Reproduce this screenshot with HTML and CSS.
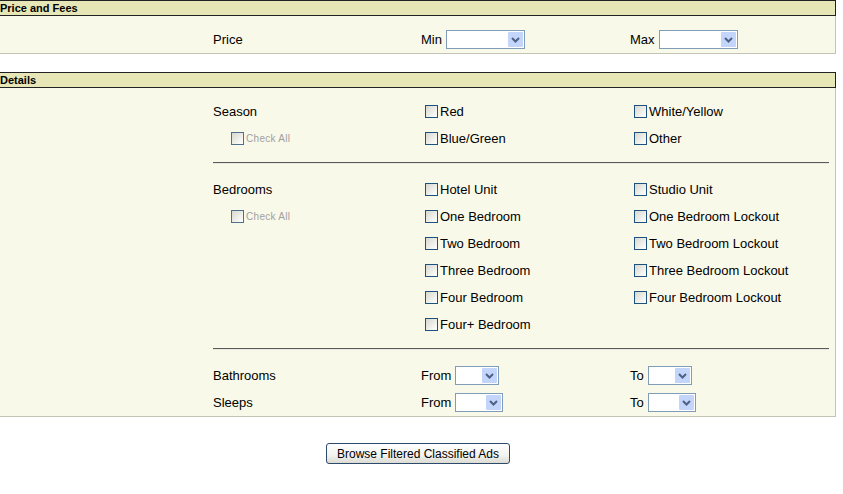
FILE: index.html
```html
<!DOCTYPE html>
<html lang="en">
<head>
    <meta charset="UTF-8">
    <title>Browse Classified Ads</title>
    <link rel="stylesheet" href="styles.css">
</head>
<body>
<div id="search">

    <div class="panel-head">Price and Fees</div>
    <div class="panel-body">
        <div class="row">
            <span>Price</span>
            <span class="pick">Min <span class="combo w78"><span class="field"></span><svg class="arrow" width="15" height="15" viewBox="0 0 15 15"><rect x="0" y="0" width="15" height="15" rx="1" fill="#c4d5fb"/><path d="M4 6 L7.5 9.5 L11 6" fill="none" stroke="#4d6185" stroke-width="2"/></svg></span></span>
            <span class="pick">Max <span class="combo w78"><span class="field"></span><svg class="arrow" width="15" height="15" viewBox="0 0 15 15"><rect x="0" y="0" width="15" height="15" rx="1" fill="#c4d5fb"/><path d="M4 6 L7.5 9.5 L11 6" fill="none" stroke="#4d6185" stroke-width="2"/></svg></span></span>
        </div>
    </div>

    <div class="panel-head second">Details</div>
    <div class="panel-body details">
        <div class="row">
            <span>Season</span>
            <label class="opt"><input type="checkbox">Red</label>
            <label class="opt"><input type="checkbox">White/Yellow</label>
        </div>
        <div class="row">
            <label class="check-all"><input type="checkbox">Check All</label>
            <label class="opt"><input type="checkbox">Blue/Green</label>
            <label class="opt"><input type="checkbox">Other</label>
        </div>

        <div class="sep"></div>

        <div class="row">
            <span>Bedrooms</span>
            <label class="opt"><input type="checkbox">Hotel Unit</label>
            <label class="opt"><input type="checkbox">Studio Unit</label>
        </div>
        <div class="row">
            <label class="check-all"><input type="checkbox">Check All</label>
            <label class="opt"><input type="checkbox">One Bedroom</label>
            <label class="opt"><input type="checkbox">One Bedroom Lockout</label>
        </div>
        <div class="row">
            <span></span>
            <label class="opt"><input type="checkbox">Two Bedroom</label>
            <label class="opt"><input type="checkbox">Two Bedroom Lockout</label>
        </div>
        <div class="row">
            <span></span>
            <label class="opt"><input type="checkbox">Three Bedroom</label>
            <label class="opt"><input type="checkbox">Three Bedroom Lockout</label>
        </div>
        <div class="row">
            <span></span>
            <label class="opt"><input type="checkbox">Four Bedroom</label>
            <label class="opt"><input type="checkbox">Four Bedroom Lockout</label>
        </div>
        <div class="row">
            <span></span>
            <label class="opt"><input type="checkbox">Four+ Bedroom</label>
            <span></span>
        </div>

        <div class="sep"></div>

        <div class="row">
            <span>Bathrooms</span>
            <span class="pick">From <span class="combo w43"><span class="field"></span><svg class="arrow" width="15" height="15" viewBox="0 0 15 15"><rect x="0" y="0" width="15" height="15" rx="1" fill="#c4d5fb"/><path d="M4 6 L7.5 9.5 L11 6" fill="none" stroke="#4d6185" stroke-width="2"/></svg></span></span>
            <span class="pick">To <span class="combo w43"><span class="field"></span><svg class="arrow" width="15" height="15" viewBox="0 0 15 15"><rect x="0" y="0" width="15" height="15" rx="1" fill="#c4d5fb"/><path d="M4 6 L7.5 9.5 L11 6" fill="none" stroke="#4d6185" stroke-width="2"/></svg></span></span>
        </div>
        <div class="row">
            <span>Sleeps</span>
            <span class="pick">From <span class="combo w47"><span class="field"></span><svg class="arrow" width="15" height="15" viewBox="0 0 15 15"><rect x="0" y="0" width="15" height="15" rx="1" fill="#c4d5fb"/><path d="M4 6 L7.5 9.5 L11 6" fill="none" stroke="#4d6185" stroke-width="2"/></svg></span></span>
            <span class="pick">To <span class="combo w47"><span class="field"></span><svg class="arrow" width="15" height="15" viewBox="0 0 15 15"><rect x="0" y="0" width="15" height="15" rx="1" fill="#c4d5fb"/><path d="M4 6 L7.5 9.5 L11 6" fill="none" stroke="#4d6185" stroke-width="2"/></svg></span></span>
        </div>
    </div>

    <div class="actions">
        <button type="button">Browse Filtered Classified Ads</button>
    </div>

</div>
</body>
</html>
```

FILE: styles.css
```css
body {
    margin: 0;
    background-color: #fff;
    font-family: "Liberation Sans", Arial, sans-serif;
    font-size: 13px;
    color: #000;
}
#search {
    width: 836px;
}
.panel-head {
    height: 14px;
    line-height: 14px;
    background-color: #e6e6b6;
    border-top: 1px solid #222;
    border-bottom: 1px solid #222;
    border-right: 1px solid #222;
    font-size: 11px;
    font-weight: bold;
}
.panel-head.second {
    margin-top: 18px;
}
.panel-body {
    background-color: #f9f9ea;
    border-right: 1px solid #c4c4b4;
    border-bottom: 1px solid #c4c4b4;
    padding: 10px 6px 0 213px;
}
.row {
    display: grid;
    grid-template-columns: 208px 209px 1fr;
    height: 27px;
    align-items: center;
}
.pick {
    display: flex;
    align-items: center;
    gap: 4px;
}
.combo {
    display: inline-flex;
    align-items: center;
    height: 17px;
    border: 1px solid #7f9db9;
    background-color: #fff;
    padding-right: 1px;
}
.combo .field {
    flex: 1;
}
.w78 { width: 76px; }
.w43 { width: 41px; }
.w47 { width: 45px; }
.opt {
    display: flex;
    align-items: center;
}
.opt input,
.check-all input {
    appearance: none;
    -webkit-appearance: none;
    width: 13px;
    height: 13px;
    margin: 0 2px 0 4px;
    border: 1px solid #1c5180;
    background: linear-gradient(135deg, #d8d8d0 0%, #f4f4f0 70%, #ffffff 100%);
}
.check-all {
    display: flex;
    align-items: center;
    padding-left: 14px;
    font-size: 10px;
    letter-spacing: 0.3px;
    color: #a0a0a0;
}
.check-all input {
    border-color: #4f6f8f;
}
.sep {
    margin: 10px 0 12px;
    border-top: 1px solid #5a5a5a;
    border-bottom: 1px solid #e8e8dc;
}
.actions {
    display: flex;
    justify-content: center;
    margin-top: 26px;
}
button {
    height: 21px;
    padding: 0 10px;
    font-family: "Liberation Sans", Arial, sans-serif;
    font-size: 12px;
    color: #000;
    background: linear-gradient(#ffffff, #f2f2ee 60%, #dcdcd4);
    border: 1px solid #2c4a6c;
    border-radius: 3px;
}
```
